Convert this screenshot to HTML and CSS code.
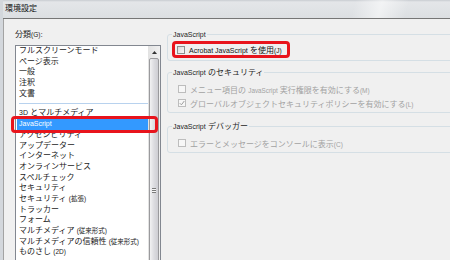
FILE: index.html
```html
<!DOCTYPE html>
<html lang="ja">
<head>
  <meta charset="UTF-8">
  <title>環境設定</title>
  <link rel="stylesheet" href="styles.css">
</head>
<body>
  <div class="window">
    <div class="titlebar">環境設定</div>
    <div class="content">
      <div class="categories">
        <div class="caption">分類<span class="key">(G)</span>:</div>
        <div class="listbox">
          <ul class="items">
            <li>フルスクリーンモード</li>
            <li>ページ表示</li>
            <li>一般</li>
            <li>注釈</li>
            <li>文書</li>
            <li class="divider"></li>
            <li><span class="en">3D</span> とマルチメディア</li>
            <li class="selected mark"><span class="en">JavaScript</span></li>
            <li>アクセシビリティ</li>
            <li>アップデーター</li>
            <li>インターネット</li>
            <li>オンラインサービス</li>
            <li>スペルチェック</li>
            <li>セキュリティ</li>
            <li>セキュリティ <span class="note">(拡張)</span></li>
            <li>トラッカー</li>
            <li>フォーム</li>
            <li>マルチメディア <span class="note">(従来形式)</span></li>
            <li>マルチメディアの信頼性 <span class="note">(従来形式)</span></li>
            <li>ものさし <span class="note">(2D)</span></li>
          </ul>
          <div class="scrollbar">
            <div class="arrow">
              <svg width="5" height="3" viewBox="0 0 5 3"><polygon points="2.5,0 5,3 0,3" fill="#333"/></svg>
            </div>
            <div class="thumb"><span class="grip"></span></div>
          </div>
        </div>
      </div>

      <div class="settings">
        <fieldset class="group first">
          <legend><span class="en">JavaScript</span></legend>
          <div class="row mark">
            <span class="box"></span>
            <span><span class="en">Acrobat JavaScript</span> を使用<span class="key">(J)</span></span>
          </div>
        </fieldset>

        <fieldset class="group">
          <legend><span class="en">JavaScript</span> のセキュリティ</legend>
          <div class="row disabled">
            <span class="box"></span>
            <span>メニュー項目の <span class="en small">JavaScript</span> 実行権限を有効にする<span class="key">(M)</span></span>
          </div>
          <div class="row disabled">
            <span class="box">
              <svg width="6" height="6" viewBox="0 0 6 6"><path d="M0.8 3.2 L2.4 4.8 L5.3 1" fill="none" stroke="#9c9c9c" stroke-width="1"/></svg>
            </span>
            <span>グローバルオブジェクトセキュリティポリシーを有効にする<span class="key">(L)</span></span>
          </div>
        </fieldset>

        <fieldset class="group last">
          <legend><span class="en">JavaScript</span> デバッガー</legend>
          <div class="row disabled">
            <span class="box"></span>
            <span>エラーとメッセージをコンソールに表示<span class="key">(C)</span></span>
          </div>
        </fieldset>
      </div>
    </div>
  </div>
</body>
</html>
```

FILE: styles.css
```css
* {
  box-sizing: border-box;
}
body {
  margin: 0;
  background: #f0f0f0;
  font-family: "Liberation Sans", "Noto Sans CJK JP", sans-serif;
  font-size: 8px;
  color: #1a1a1a;
}
.window {
  width: 450px;
  height: 260px;
  overflow: hidden;
  border-left: 3px solid #d3d7dc;
}
.titlebar {
  height: 19px;
  line-height: 18px;
  padding-left: 2px;
  border-bottom: 1px solid #767676;
  background:
    linear-gradient(105deg, transparent 78%, rgba(255, 255, 255, 0.55) 84%, transparent 90%),
    linear-gradient(to bottom, #c8ccd1 0, #e4e6e9 2px, #dcdfe2 100%);
  color: #111;
}
.content {
  display: flex;
  height: 241px;
  border-left: 1px solid #a3a3a3;
}
.en {
  font-size: 7px;
}
.en.small {
  font-size: 6.3px;
}
.note,
.key {
  font-size: 6.5px;
}

/* category list */
.categories {
  width: 157px;
  flex-shrink: 0;
  padding: 9.5px 0 0 11px;
}
.caption {
  line-height: 11px;
  margin-bottom: 5.5px;
}
.listbox {
  display: flex;
  width: 146px;
  height: 230px;
  background: #fff;
  border: 1px solid #828790;
}
.items {
  flex: 1;
  margin: 0;
  padding: 0;
  list-style: none;
}
.items li {
  height: 10.7px;
  line-height: 10.7px;
  margin-left: 1px;
  padding-left: 2px;
  white-space: nowrap;
}
.items li.divider {
  height: 0;
  margin: 4px 0 4px 3px;
  border-top: 1px solid #b8d2ee;
}
.items li.selected {
  background: #3399ff;
  color: #fff;
}
.items li.mark {
  position: relative;
}
.items li.mark::after {
  content: "";
  position: absolute;
  top: -3px;
  bottom: -3px;
  left: -6px;
  right: -10px;
  border: 3px solid #e8141c;
  border-radius: 4px;
  z-index: 1;
}
.scrollbar {
  width: 12px;
  padding: 0 1px;
  background: linear-gradient(to right, #e2e2e2, #f0f0f0);
}
.arrow {
  height: 12px;
  display: flex;
  align-items: center;
  justify-content: center;
}
.thumb {
  height: 264px;
  display: flex;
  align-items: center;
  justify-content: center;
  border: 1px solid #9a9a9d;
  border-radius: 2px;
  background: linear-gradient(to right, #f2f2f3, #dcdce0 50%, #ceced3);
}
.grip {
  width: 4px;
  height: 5px;
  background: repeating-linear-gradient(to bottom, #7a7a7a 0 1px, #f6f6f6 1px 2px);
}

/* settings */
.settings {
  flex: 1;
  padding: 9.5px 0 0 6px;
}
.group {
  width: 300px;
  margin: 6px 0 0;
  padding: 5.5px 4px 3.5px;
  border: 1px solid #d5dfe5;
  border-radius: 3px;
}
.group.first {
  margin-top: 0;
  padding-top: 4.5px;
  padding-bottom: 5px;
}
.group.last {
  margin-top: 8px;
}
.group legend {
  padding: 0 1px;
  line-height: 11px;
  color: #1e1e1e;
}
.row {
  display: flex;
  align-items: center;
  gap: 4px;
  height: 11px;
  padding-left: 6px;
}
.row + .row {
  margin-top: 3px;
}
.row.mark {
  position: relative;
  width: fit-content;
  padding: 0 8px 0 5px;
  color: #111;
}
.row.mark::after {
  content: "";
  position: absolute;
  top: -3px;
  bottom: -3px;
  left: 0;
  right: 0;
  border: 3px solid #e8141c;
  border-radius: 4px;
}
.box {
  display: flex;
  align-items: center;
  justify-content: center;
  width: 8px;
  height: 8px;
  flex-shrink: 0;
  border: 1px solid #8e8f8f;
  background: linear-gradient(135deg, #d9d9d9, #fafafa);
}
.disabled {
  color: #a2a2a2;
}
.disabled .box {
  border-color: #bdbdbd;
  background: #f7f7f7;
}
```
